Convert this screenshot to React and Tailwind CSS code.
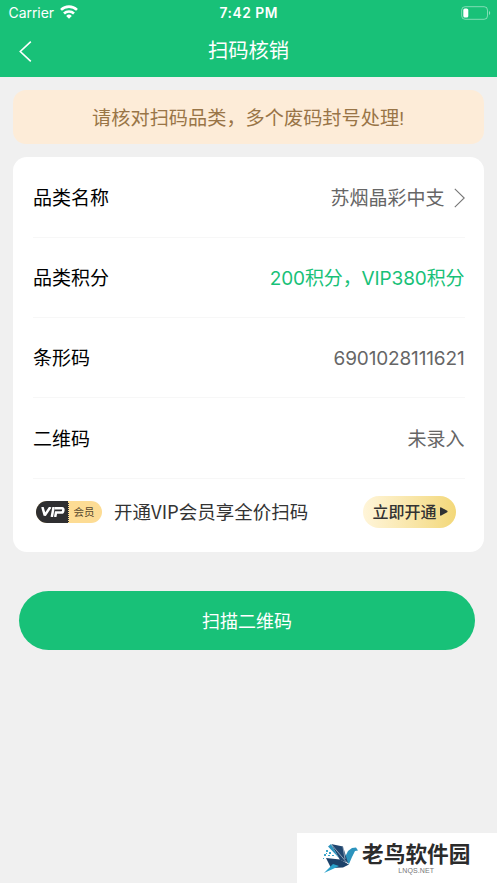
function StatusBar() {
  return (
    <div className="grid grid-cols-3 items-center h-[26px] pl-[8.5px] pr-[6px] font-['Inter','Noto_Sans_CJK_SC',sans-serif] text-white">
      <div className="flex items-center gap-[6px]">
        <span className="text-[14px] leading-none tracking-[-0.05px]">Carrier</span>
        <svg className="-mt-[2px]" width="18" height="14" viewBox="0 0 18 14" fill="none" stroke="#fff" strokeWidth="2.6">
          <path d="M1 4.9a11.5 11.5 0 0 1 16 0" />
          <path d="M4 8.5a7.2 7.2 0 0 1 10 0" />
          <path d="M9 13.7 6.2 10.9a4 4 0 0 1 5.6 0z" fill="#fff" stroke="none" />
        </svg>
      </div>
      <span className="text-center text-[13.8px] font-semibold leading-none tracking-[0.5px] whitespace-nowrap pt-px pr-[2px]">
        7:42 PM
      </span>
      <svg className="justify-self-end -mt-px" width="30" height="14" viewBox="0 0 30 14" fill="none">
        <rect x="0.7" y="0.7" width="25.8" height="12.6" rx="3.4" stroke="#fff" strokeOpacity="0.45" />
        <rect x="2.3" y="2.5" width="5" height="9" rx="1.6" fill="#fff" />
        <path d="M28 5v4c1.6-.6 1.6-3.4 0-4z" fill="#fff" fillOpacity="0.5" />
      </svg>
    </div>
  );
}

function Row({ label, children }) {
  return (
    <div className="flex items-center justify-between h-[80.3px] border-b border-[#f7f7f7] pt-[4px]">
      <span className="text-black">{label}</span>
      <div className="flex items-center text-[#666]">{children}</div>
    </div>
  );
}

function VipBadge() {
  return (
    <div className="flex w-[66px] h-[22px] mt-px rounded-full overflow-hidden bg-[#fddc94]">
      <div className="flex items-center justify-center w-[33px] pl-px bg-[#2f2f31] border-r border-dotted border-[#fddc94]">
        <svg width="24" height="10" viewBox="0 0 24 10" fill="none" stroke="#fff" strokeWidth="2.5">
          <path d="M1.4 0 3.8 8.3 9.4 0" strokeLinejoin="bevel" />
          <path d="M12.6 0 10.8 10" />
          <path d="M14.2 10 15 5.6h5.4q1.6 0 1.9-2.1.4-2.2-1.3-2.2h-7.4" />
        </svg>
      </div>
      <span className="flex-1 text-center text-[10.5px] leading-[22px] text-[#55462d] pr-[3px]">会员</span>
    </div>
  );
}

function BirdLogo() {
  return (
    <svg width="37" height="32" viewBox="0 0 37 32">
      <path d="M22 17 26 9 30 6 34 5.5 36 8.5 33 9 30 15 27 22z" fill="#2c93bd" />
      <path d="M9 2 21 4.5 26 21 18 18z" fill="#20466f" />
      <path d="M9 2 6 4.5 17 16z" fill="#2c93bd" />
      <path d="M4 16 18 17.5 27 22.5 21 25.5 9 26z" fill="#1c4169" />
      <path d="M11 22 2 31 13 26 17 24z" fill="#2aa2cb" />
      <path d="m9 2 17 20M21 5l2 12" stroke="#fff" strokeWidth="0.5" />
      <path d="M4 8h2v2H4zM7 10h2v2H7zM2 12h2v2H2zM6 13h2v1H6zM1 16h1v1H1zM10 13h2v1h-2zM4 11h1v1H4z" fill="#3aa5cb" />
    </svg>
  );
}

function App() {
  return (
    <div className="flex flex-col w-[497px] h-[883px] overflow-hidden bg-[#f0f0f0] font-['Liberation_Sans','Noto_Sans_CJK_SC',sans-serif] text-[19px]">
      <header className="h-[77px] bg-[#18c178] text-white">
        <StatusBar />
        <div className="grid grid-cols-3 items-center h-[51px] pl-[19px] pr-[19px]">
          <svg width="13" height="21" viewBox="0 0 13 21" fill="none" stroke="#fff" strokeWidth="1.6">
            <path d="M11.8 0.7 1.3 10.5l10.5 9.8" />
          </svg>
          <h1 className="text-center text-[20.3px] font-normal whitespace-nowrap">扫码核销</h1>
        </div>
      </header>

      <div className="flex items-center justify-center h-[54px] mt-[13px] ml-[13px] mr-[13.5px] pt-[4px] rounded-[13px] bg-[#fdecd8] text-[19.2px] text-[#997547]">
        请核对扫码品类，多个废码封号处理!
      </div>

      <main className="h-[395px] mt-[13px] ml-[13px] mr-[13.5px] pt-[0.5px] pl-5 pr-[19px] rounded-[14px] bg-white">
        <Row label="品类名称">
          <span>苏烟晶彩中支</span>
          <svg className="ml-[9px] -mt-[3px]" width="11" height="20" viewBox="0 0 11 20" fill="none" stroke="#777" strokeWidth="1.1">
            <path d="m0.8 0.8 9.4 9.2-9.4 9.2" />
          </svg>
        </Row>
        <Row label="品类积分">
          <span className="font-['Inter','Noto_Sans_CJK_SC',sans-serif] tracking-[-0.12px] text-[#18c178]">
            200积分，VIP380积分
          </span>
        </Row>
        <Row label="条形码">
          <span className="font-['Inter','Noto_Sans_CJK_SC',sans-serif] tracking-[-0.15px]">6901028111621</span>
        </Row>
        <Row label="二维码">
          <span>未录入</span>
        </Row>
        <div className="flex items-center h-[66px] pl-[3px] pr-[9px]">
          <VipBadge />
          <span className="ml-3 font-['Noto_Sans_CJK_SC',sans-serif] text-[18.5px] text-[#333]">开通VIP会员享全价扫码</span>
          <button className="flex items-center justify-center gap-[3px] w-[93px] h-8 ml-auto pt-[2px] pl-[2px] rounded-full bg-linear-to-r from-[#fff5d9] to-[#f3d879] text-[16px] font-medium text-[#333]">
            立即开通
            <svg className="-mt-[2px]" width="8" height="9" viewBox="0 0 8 9" fill="#2f3133">
              <path d="M0 1.2Q0 0 1.2.4L7.2 3.8Q8 4.5 7.2 5.2L1.2 8.6Q0 9 0 7.8z" />
            </svg>
          </button>
        </div>
      </main>

      <button className="h-[59px] mt-[39px] ml-[19px] mr-[22px] pt-[3px] rounded-full bg-[#18c178] text-[18px] text-white">
        扫描二维码
      </button>

      <footer className="flex items-center self-end w-[200px] h-[50px] mt-auto pl-[25px] bg-white">
        <BirdLogo />
        <div className="flex flex-col items-center ml-[3px] pt-px">
          <span className="text-[21.7px] leading-[24px] font-bold text-[#2b2b2b] whitespace-nowrap">老鸟软件园</span>
          <span className="text-[7px] leading-[8px] tracking-[0.1px] text-[#777]">LNQS.NET</span>
        </div>
      </footer>
    </div>
  );
}

export default App;
